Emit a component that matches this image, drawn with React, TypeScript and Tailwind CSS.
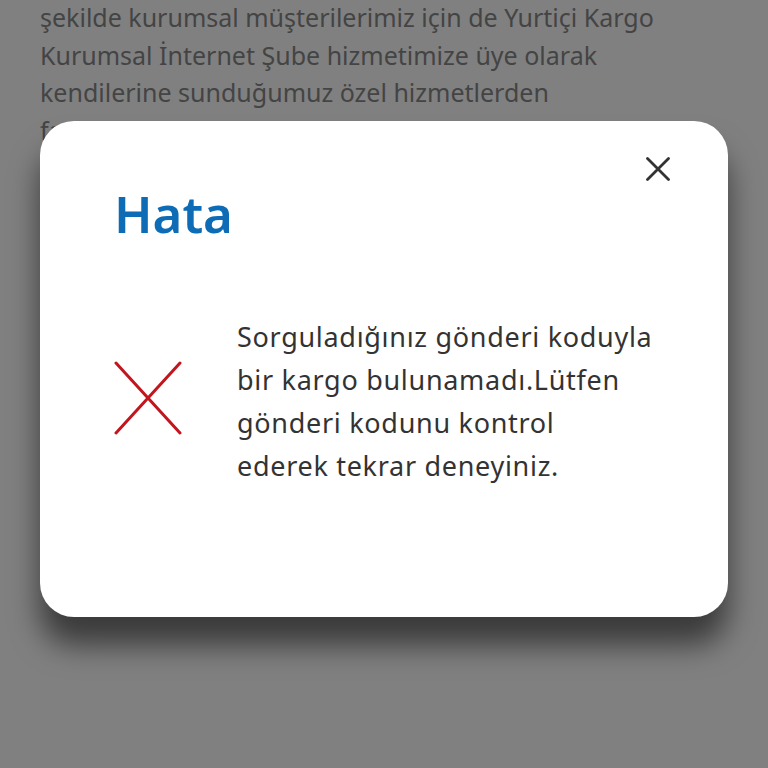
const font = { fontFamily: '"Noto Sans", "Open Sans", sans-serif' }

export default function App() {
    return (
        <div className="relative h-[768px] w-[768px] overflow-hidden bg-[#808080]" style={font}>
            {/* page behind the overlay */}
            <div className="-mt-[1px] px-10 text-[25px] leading-[37.5px] text-[#444]">
                <p>
                    şekilde kurumsal müşterilerimiz için de Yurtiçi Kargo<br />
                    Kurumsal İnternet Şube hizmetimize üye olarak<br />
                    kendilerine sunduğumuz özel hizmetlerden<br />
                    faydalanabilirler.
                </p>
            </div>

            {/* modal */}
            <div className="absolute left-10 top-[121px] h-[496px] w-[688px] rounded-[34px] bg-white shadow-[0_28px_30px_rgba(0,0,0,0.55)]">
                <button className="absolute right-[58px] top-[36px] flex h-6 w-6 items-center justify-center">
                    <svg width="24" height="24" viewBox="0 0 24 24">
                        <path d="M1.5 1.5 L22.5 22.5 M22.5 1.5 L1.5 22.5" stroke="#333" strokeWidth="2.8" strokeLinecap="round" />
                    </svg>
                </button>

                <h2 className="pl-[74px] pt-[66px] text-[51px] font-semibold leading-[52px] text-[#0d6cb5]">Hata</h2>

                <div className="mt-[76px] flex items-center gap-[55px] pl-[74px]">
                    <svg width="68" height="74" viewBox="0 0 68 74" className="mt-[-6px] shrink-0">
                        <path d="M2 2 L66 72 M66 2 L2 72" stroke="#c3151d" strokeWidth="3" strokeLinecap="round" />
                    </svg>
                    <p className="w-[440px] text-[27px] leading-[43px] tracking-[0.7px] text-[#333]">
                        Sorguladığınız gönderi koduyla<br />
                        bir kargo bulunamadı.Lütfen<br />
                        gönderi kodunu kontrol<br />
                        ederek tekrar deneyiniz.
                    </p>
                </div>
            </div>
        </div>
    )
}
